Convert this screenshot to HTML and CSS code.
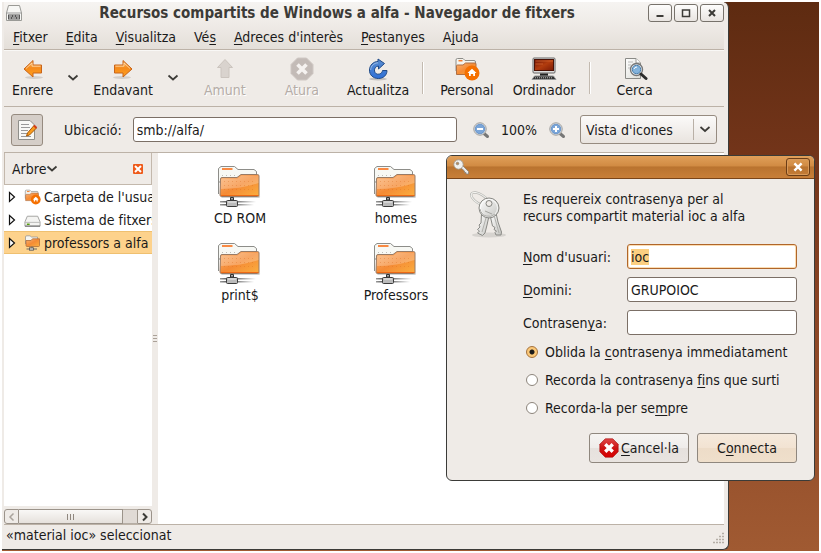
FILE: index.html
```html
<!DOCTYPE html>
<html lang="ca">
<head>
<meta charset="utf-8">
<title>Recursos compartits de Windows a alfa - Navegador de fitxers</title>
<link rel="stylesheet" href="styles.css">
</head>
<body>
<svg class="defs" aria-hidden="true">
  <defs>
    <linearGradient id="g-orange" x1="0" y1="0" x2="0" y2="1"><stop offset="0" stop-color="#fdbb6b"/><stop offset=".45" stop-color="#f58a1c"/><stop offset="1" stop-color="#ffa01c"/></linearGradient>
    <linearGradient id="g-folder" x1="0" y1="0" x2="1" y2="1"><stop offset="0" stop-color="#f9b376"/><stop offset=".5" stop-color="#f58b35"/><stop offset="1" stop-color="#fbb03f"/></linearGradient>
    <linearGradient id="g-paper" x1="0" y1="0" x2="1" y2="1"><stop offset="0" stop-color="#fff"/><stop offset="1" stop-color="#dcdcd6"/></linearGradient>
    <linearGradient id="g-blue" x1="0" y1="0" x2="0" y2="1"><stop offset="0" stop-color="#5b8ed0"/><stop offset="1" stop-color="#2f6fd6"/></linearGradient>
    <linearGradient id="g-screen" x1="0" y1="0" x2="1" y2="1"><stop offset="0" stop-color="#6f1405"/><stop offset=".5" stop-color="#b23c0e"/><stop offset="1" stop-color="#7a1a05"/></linearGradient>
    <linearGradient id="g-metal" x1="0" y1="0" x2="1" y2="1"><stop offset="0" stop-color="#fff"/><stop offset="1" stop-color="#c4c4c0"/></linearGradient>
    <linearGradient id="g-red" x1="0" y1="0" x2="0" y2="1"><stop offset="0" stop-color="#e04848"/><stop offset=".5" stop-color="#cc1414"/><stop offset="1" stop-color="#d80000"/></linearGradient>
    <linearGradient id="g-wire" x1="0" y1="0" x2="1" y2="0"><stop offset="0" stop-color="#999"/><stop offset=".3" stop-color="#444"/><stop offset="1" stop-color="#555" stop-opacity="0"/></linearGradient>
    <symbol id="i-arrow" viewBox="0 0 24 24">
      <ellipse cx="13" cy="20.500" rx="9" ry="1.500" fill="#000" opacity=".12"/>
      <path d="M3 12 L12 3.500 V8 H20.500 V16 H12 V20 Z" fill="url(#g-orange)" stroke="#c8641a" stroke-linejoin="round"/>
      <path d="M5 11.500 L11 6 V9.200 H19.500" fill="none" stroke="#ffdcae" opacity=".8"/>
    </symbol>
    <symbol id="i-up" viewBox="0 0 24 24">
      <path d="M12 2.500 L19.500 10.500 H16 V20.500 H8 V10.500 H4.500 Z" fill="#d9d3ce" stroke="#cbc4be" stroke-linejoin="round"/>
    </symbol>
    <symbol id="i-stop" viewBox="0 0 24 24">
      <path d="M7.500 1 H16.500 L23 7.500 V16.500 L16.500 23 H7.500 L1 16.500 V7.500 Z" fill="#c3bbb7" stroke="#cfc8c4"/>
      <path d="M7.500 7.500 L16.500 16.500 M16.500 7.500 L7.500 16.500" stroke="#f5f2f0" stroke-width="3.600"/>
    </symbol>
    <symbol id="i-cancel" viewBox="0 0 24 24">
      <path d="M7.500 1 H16.500 L23 7.500 V16.500 L16.500 23 H7.500 L1 16.500 V7.500 Z" fill="url(#g-red)" stroke="#a80f0f" stroke-width=".8"/>
      <path d="M7.500 7.500 L16.500 16.500 M16.500 7.500 L7.500 16.500" stroke="#fff" stroke-width="4"/>
    </symbol>
    <symbol id="i-reload" viewBox="0 0 24 24">
      <ellipse cx="12" cy="22" rx="9" ry="1.500" fill="#000" opacity=".18"/>
      <path d="M12 4.500 V2 L18.500 6.500 L12.500 12 V9 C9.500 9.300 8.200 11.500 8.500 14 C9 16.500 11 17.800 13.500 17 C15.500 16.300 16.300 15 16.500 13.500 H21 C21 18.500 17 21.500 12.500 21.500 C7 21.500 3.300 17.800 3.500 13 C3.700 8 7.500 4.500 12 4.500 Z" fill="url(#g-blue)" stroke="#204a87" stroke-linejoin="round"/>
      <path d="M12 5.800 C8 6 4.700 9 4.700 13" fill="none" stroke="#a9c6ec" opacity=".8"/>
    </symbol>
    <symbol id="i-home" viewBox="0 0 26 24">
      <path d="M2 3 Q2 1.500 3.500 1.500 H9 L11 3.500 H20 Q21.500 3.500 21.500 5 V14 H2 Z" fill="#f5f5f0" stroke="#8c8c88"/>
      <path d="M4.500 3.700 H8.500" stroke="#f57c2c" stroke-width="1.500"/>
      <path d="M2.500 17.500 V9 Q2.500 8 3.500 8 H9 L11.500 6 H21 Q22 6 22 7 V17.500 Z" fill="url(#g-folder)" stroke="#b06f43"/>
      <circle cx="18" cy="16" r="7.500" fill="#f57000"/>
      <path d="M18 11.800 L22.500 16 H21 V19 H19.200 V17 H16.800 V19 H15 V16 H13.500 Z" fill="#fff"/>
    </symbol>
    <symbol id="i-computer" viewBox="0 0 26 24">
      <rect x="2" y="1" width="22" height="15" rx="1" fill="#ddd" stroke="#666"/>
      <rect x="3.500" y="2.500" width="19" height="11" fill="url(#g-screen)" stroke="#4a1206"/>
      <path d="M4.500 4 H22 M4.500 7 H12" stroke="#e0743a" opacity=".6"/>
      <path d="M9 16.500 H17 V19 H9 Z" fill="#222"/>
      <path d="M3.500 19 H22.500 L25 22.500 H1 Z" fill="#333" stroke="#999"/>
      <path d="M4 20.800 H22" stroke="#bbb" stroke-dasharray="1 1"/>
    </symbol>
    <symbol id="i-search" viewBox="0 0 26 24">
      <path d="M3.500 1.500 H14 L18.500 6 V21.500 H3.500 Z" fill="url(#g-paper)" stroke="#8a8a86"/>
      <path d="M14 1.500 V6 H18.500" fill="#fff" stroke="#9a9a96"/>
      <path d="M6 5 H11 M6 8 H9 M6 11 H8" stroke="#bbb"/>
      <circle cx="14.500" cy="12.500" r="6" fill="#e8f0f8" stroke="#777" stroke-width="1.400"/>
      <circle cx="14.500" cy="12.500" r="4.200" fill="#83b3dc" stroke="#4d80ac"/>
      <path d="M12 12 Q12.500 10 15 10" fill="none" stroke="#fff"/>
      <path d="M19 17 L24 21.500" stroke="#2c2c2c" stroke-width="3" stroke-linecap="round"/>
    </symbol>
    <symbol id="i-lens" viewBox="0 0 18 18">
      <path d="M12 12.500 L15.500 15.500" stroke="#777" stroke-width="3" stroke-linecap="round"/>
      <circle cx="8" cy="8" r="6.200" fill="#f2f2f0" stroke="#999"/>
      <circle cx="8" cy="8" r="4.800" fill="#7ba6d9" stroke="#5b88c0" stroke-width=".8"/>
    </symbol>
    <symbol id="i-netfolder" viewBox="1 0 46 44">
      <rect x="5" y="31" width="39" height="3" fill="#000" opacity=".18" rx="1.500"/>
      <path d="M2.500 30 V4.500 L5 2.500 H18.500 L22 5.500 H38 L40.500 7.500 V18 H2.500 Z" fill="#f7f8f4" stroke="#8d8d89"/>
      <path d="M6 5 H16.500" stroke="#f98a44" stroke-width="2"/>
      <path d="M6 11.500 H22" stroke="#bdbdb7" stroke-dasharray="1 3"/>
      <path d="M4.500 15 Q4.500 13.500 6 13.500 H21 L25 10.500 H41.500 Q43 10.500 43 12 V31 Q43 32.500 41.500 32.500 H5.500 Q4 32.500 4 31 Z" fill="url(#g-folder)" stroke="#987b66"/>
      <path d="M5 15.500 Q5 14.500 7 14.500 H21.500 L25.500 11.500 H42.500 V19 Q25 25 5 25 Z" fill="#fff" opacity=".24"/>
      <path d="M5 31.500 H42.500" stroke="#ee6a15"/>
      <path d="M8 17.500 H40 M8 21.500 H40 M8 25.500 H40" stroke="#d96a1d" stroke-dasharray="1 3" opacity=".35"/>
      <path d="M14.500 33.500 H17.500 V36 H14.500 Z" fill="#aaa" stroke="#333"/>
      <rect x="4" y="37" width="36" height="1.500" fill="url(#g-wire)"/>
      <rect x="4" y="40" width="34" height="1.500" fill="url(#g-wire)"/>
      <rect x="10.500" y="36.500" width="11" height="6" rx="1" fill="#bbb" stroke="#3c3c3c"/>
      <path d="M12 38 H20" stroke="#eee"/>
    </symbol>
    <symbol id="i-netmini" viewBox="0 0 17 16">
      <path d="M1.500 9 V2 Q1.500 .8 2.700 .8 H6 L7.500 2 H13.500 V6 H1.500 Z" fill="#f5f5f0" stroke="#999590" stroke-width=".8"/>
      <path d="M2 10.500 V5.500 H7 L8.500 3.800 H15.500 V10.500 Q15.500 11.500 14.500 11.500 H3 Q2 11.500 2 10.500 Z" fill="url(#g-folder)" stroke="#b0703c" stroke-width=".8"/>
      <path d="M2.500 14 H13 M8 11.500 V13" stroke="#6b6b68"/>
      <rect x="5.500" y="12.800" width="4" height="2.400" fill="#c9c9c6" stroke="#555" stroke-width=".8"/>
    </symbol>
    <symbol id="i-disk" viewBox="0 0 18 16">
      <path d="M3.500 4 H14.500 L17 10 V14.500 H1 V10 Z" fill="#f4f4f2" stroke="#a0a09e" stroke-linejoin="round"/>
      <path d="M1 10.500 H17" stroke="#b9b9b7"/><path d="M1 14.500 H17" stroke="#666"/><path d="M3 12.500 H6" stroke="#4e9a06" stroke-width="1.500"/>
    </symbol>
    <symbol id="i-cross" viewBox="0 0 10 10"><path d="M2 2 L8 8 M8 2 L2 8" stroke="currentColor" stroke-width="2"/></symbol>
    <symbol id="i-down" viewBox="0 0 12 8"><path d="M1.500 1.500 L6 5.500 L10.500 1.500" fill="none" stroke="#3c3b37" stroke-width="1.700"/></symbol>
    <symbol id="i-expand" viewBox="0 0 8 12"><path d="M1.500 1.500 L6.500 6 L1.500 10.500 Z" fill="#fff" stroke="#111" stroke-width="1.200"/></symbol>
    <symbol id="i-key" viewBox="0 0 16 16">
      <path d="M7.500 8.500 L9.500 6.500 L15.500 12.500 V15 H13 V13.500 H11.500 V12 Z" fill="#ececea" stroke="#8a8278" stroke-width=".8"/>
      <circle cx="5.500" cy="5.500" r="4.700" fill="#f1f1ef" stroke="#9a948c" stroke-width=".8"/>
      <circle cx="4.500" cy="4.500" r="1.300" fill="#b98a55" stroke="#777" stroke-width=".6"/>
    </symbol>
    <symbol id="i-keys" viewBox="0 0 40 48">
      <ellipse cx="21" cy="44" rx="17" ry="2.500" fill="#000" opacity=".1"/>
      <ellipse cx="12" cy="8" rx="10" ry="4.500" transform="rotate(32 12 8)" fill="none" stroke="#b9b9b5" stroke-width="2.400"/>
      <ellipse cx="12" cy="8" rx="10" ry="4.500" transform="rotate(32 12 8)" fill="none" stroke="#f3f3f0"/>
      <path d="M22 24 L28 22 L30 31 L33.500 41 L33 44 H28 L27 41.500 L28.500 40 L26 38.500 L27 36.500 L24.500 35 Z" fill="url(#g-metal)" stroke="#8a8a86"/>
      <path d="M13.500 23 L21 25 L19 34 L17 42 L14.500 44.500 L9.500 42 L11.500 40 L9.500 38.500 L12 36 L11 34 L13 32 Z" fill="url(#g-metal)" stroke="#8a8a86"/>
      <circle cx="21" cy="17" r="10" fill="url(#g-metal)" stroke="#8a8a86"/>
      <circle cx="21" cy="17" r="8.500" fill="none" stroke="#fff" opacity=".8"/>
      <path d="M12 18 A9 9 0 0 0 27 23" fill="none" stroke="#a9a9a5"/>
      <circle cx="21" cy="12.500" r="3" fill="#efebe7" stroke="#858581"/>
      <path d="M18 27 L14 41 M26.500 26 L31 42" stroke="#b0b0ac"/>
      <path d="M17 20 L24 23" stroke="#a5a5a1"/>
    </symbol>
  </defs>
</svg>

<div class="desktop">
  <main class="window">
    <header class="titlebar">
      <svg class="app-icon" viewBox="0 0 16 16" aria-hidden="true"><path d="M2.500 .5 H13.500 L15.500 8 V15.500 H.5 V8 Z" fill="#f7f7f5" stroke="#9a9a96"/><path d="M.5 8 H15.500" stroke="#999"/><rect x="2" y="9.500" width="12" height="5" fill="#555"/><path d="M3 11 H6 M7 11 H9 M10 11 H13 M3 13 H5 M6 13 H10 M11 13 H13" stroke="#ddd"/></svg>
      <h1 class="title">Recursos compartits de Windows a alfa - Navegador de fitxers</h1>
      <div class="window-buttons">
        <button class="wm" aria-label="Minimitza"><svg viewBox="0 0 10 10"><path d="M1.500 8 H8.500" stroke="#3c3b37" stroke-width="2"/></svg></button>
        <button class="wm" aria-label="Maximitza"><svg viewBox="0 0 10 10"><path d="M1.500 2 H8.500 V8.500 H1.500 Z" fill="none" stroke="#3c3b37" stroke-width="1.500"/></svg></button>
        <button class="wm" aria-label="Tanca"><svg><use href="#i-cross"/></svg></button>
      </div>
    </header>
    <nav class="menubar">
      <button><u>F</u>itxer</button>
      <button><u>E</u>dita</button>
      <button><u>V</u>isualitza</button>
      <button>Vé<u>s</u></button>
      <button><u>A</u>dreces d'interès</button>
      <button><u>P</u>estanyes</button>
      <button>A<u>j</u>uda</button>
    </nav>
    <div class="toolbar">
      <button class="tool"><svg><use href="#i-arrow"/></svg>Enrere</button>
      <button class="drop" aria-label="Historial enrere"><svg><use href="#i-down"/></svg></button>
      <button class="tool forward"><svg><use href="#i-arrow"/></svg>Endavant</button>
      <button class="drop" aria-label="Historial endavant"><svg><use href="#i-down"/></svg></button>
      <button class="tool up" disabled><svg><use href="#i-up"/></svg>Amunt</button>
      <button class="tool stop" disabled><svg><use href="#i-stop"/></svg>Atura</button>
      <button class="tool"><svg><use href="#i-reload"/></svg>Actualitza</button>
      <span class="separator"></span>
      <button class="tool home"><svg><use href="#i-home"/></svg>Personal</button>
      <button class="tool"><svg><use href="#i-computer"/></svg>Ordinador</button>
      <span class="separator"></span>
      <button class="tool search"><svg><use href="#i-search"/></svg>Cerca</button>
    </div>
    <div class="locationbar">
      <button class="edit-toggle" aria-label="Edita la ubicació" aria-pressed="true">
        <svg viewBox="0 0 22 22"><path d="M2.500 1.500 H14 L18.500 6 V20.500 H2.500 Z" fill="#f8f8f5" stroke="#8f8f8b"/><path d="M5 5.500 H13 M5 8.500 H14 M5 11.500 H12 M5 14.500 H13 M5 17.500 H15" stroke="#999"/><path d="M18 6.500 L20.500 9 L13.500 16 L10.500 17 L11.500 14 Z" fill="#f99b1c" stroke="#a85a08"/><path d="M18 6.500 L20.500 9" stroke="#d23c1a" stroke-width="2"/></svg>
      </button>
      <label class="location-label" for="location">Ubicació:</label>
      <input class="field location" id="location" type="text" value="smb://alfa/">
      <div class="zoom">
        <button class="lens" aria-label="Redueix"><svg viewBox="0 0 18 18"><use href="#i-lens"/><path d="M5 8 H11" stroke="#fff" stroke-width="2"/></svg></button>
        <span>100%</span>
        <button class="lens" aria-label="Amplia"><svg viewBox="0 0 18 18"><use href="#i-lens"/><path d="M5 8 H11 M8 5 V11" stroke="#fff" stroke-width="2"/></svg></button>
      </div>
      <div class="view-select">
        <select aria-label="Mode de visualització"><option>Vista d'icones</option></select>
        <svg aria-hidden="true"><use href="#i-down"/></svg>
      </div>
    </div>
    <div class="content">
      <aside class="sidebar">
        <div class="side-head">
          <button class="side-mode">Arbre<svg><use href="#i-down"/></svg></button>
          <button class="side-close" aria-label="Tanca la barra lateral"><svg><use href="#i-cross"/></svg></button>
        </div>
        <ul class="tree">
          <li><svg class="expander"><use href="#i-expand"/></svg><svg class="node-icon"><use href="#i-home"/></svg>Carpeta de l'usuari</li>
          <li><svg class="expander"><use href="#i-expand"/></svg><svg class="node-icon"><use href="#i-disk"/></svg>Sistema de fitxers</li>
          <li class="selected"><svg class="expander"><use href="#i-expand"/></svg><svg class="node-icon"><use href="#i-netmini"/></svg>professors a alfa</li>
        </ul>
        <div class="scrollbar">
          <button class="step left" aria-label="Desplaça a l'esquerra"><svg viewBox="0 0 8 10"><path d="M5.500 1.500 L2 5 L5.500 8.500" fill="none" stroke="#aaa39c" stroke-width="1.500"/></svg></button>
          <span class="thumb"><i></i><i></i><i></i></span>
          <span class="track"></span>
          <button class="step right" aria-label="Desplaça a la dreta"><svg viewBox="0 0 8 10"><path d="M2 1.500 L5.500 5 L2 8.500" fill="none" stroke="#3c3b37" stroke-width="2"/></svg></button>
        </div>
      </aside>
      <div class="splitter"><i></i><i></i><i></i></div>
      <section class="files">
        <div class="file"><svg><use href="#i-netfolder"/></svg><span>CD ROM</span></div>
        <div class="file"><svg><use href="#i-netfolder"/></svg><span>homes</span></div>
        <div class="file"><svg><use href="#i-netfolder"/></svg><span>print$</span></div>
        <div class="file"><svg><use href="#i-netfolder"/></svg><span>Professors</span></div>
      </section>
    </div>
    <footer class="statusbar">«material ioc» seleccionat
      <svg class="grip" viewBox="0 0 12 12" aria-hidden="true"><path d="M10 1.500 H12 M7 4.500 H12 M4 7.500 H12 M1 10.500 H12" stroke="#b5aea6" stroke-width="1.500" stroke-dasharray="2 1"/></svg>
    </footer>
  </main>

  <form class="dialog" role="dialog" aria-label="Autenticació">
    <div class="dialog-title">
      <svg class="key" aria-hidden="true"><use href="#i-key"/></svg>
      <button type="button" class="dialog-close" aria-label="Tanca"><svg><use href="#i-cross"/></svg></button>
    </div>
    <div class="dialog-body">
      <svg class="keys" aria-hidden="true"><use href="#i-keys"/></svg>
      <div class="dialog-main">
        <p class="message">Es requereix contrasenya per al<br>recurs compartit material ioc a alfa</p>
        <div class="fields">
          <label for="user"><u>N</u>om d'usuari:</label><input class="field active" id="user" type="text" value="ioc">
          <label for="domain"><u>D</u>omini:</label><input class="field" id="domain" type="text" value="GRUPOIOC">
          <label for="pass">Contrasen<u>y</u>a:</label><input class="field" id="pass" type="password">
        </div>
        <div class="choices">
          <label><input type="radio" name="keep" checked><span>Oblida la <u>c</u>ontrasenya immediatament</span></label>
          <label><input type="radio" name="keep"><span>Recorda la contrasenya <u>fi</u>ns que surti</span></label>
          <label><input type="radio" name="keep"><span>Recorda-la per se<u>m</u>pre</span></label>
        </div>
        <div class="actions">
          <button type="button" class="push"><svg><use href="#i-cancel"/></svg><span><u>C</u>ancel·la</span></button>
          <button type="submit" class="push default"><span>C<u>o</u>nnecta</span></button>
        </div>
      </div>
    </div>
  </form>
</div>
<script src="script.js"></script>
</body>
</html>
```
FILE: script.js
```js
const user = document.getElementById("user");
user.focus();
user.select();
```
FILE: styles.css
```css
* { box-sizing: border-box; }

body {
  margin: 0;
  background: #fff;
  color: #1a1a1a;
  font: 14px/18px "DejaVu Sans Condensed", "DejaVu Sans", sans-serif;
}

.defs { position: absolute; width: 0; height: 0; }
svg { display: block; flex: none; }
u { text-decoration-thickness: 1px; text-underline-offset: 2px; text-decoration-skip-ink: none; }

button, input, select {
  margin: 0;
  padding: 0;
  font: inherit;
  color: inherit;
}
button { border: 0; background: none; white-space: nowrap; }

.desktop {
  position: relative;
  height: calc(100vh - 4px);
  margin: 2px;
  background: linear-gradient(#5e2b11, #74351a 30%, #8a4424 55%, #a05a32);
}

/* Main window */
.window {
  display: flex;
  flex-direction: column;
  height: calc(100% - 1px);
  margin-right: 90px;
  padding: 0 4px 0 2px;
  background: #efebe7;
  border-right: 1px solid #3b3b38;
  border-bottom: 1px solid #3b3b38;
  border-radius: 0 6px 6px 0;
}

.titlebar {
  display: flex;
  align-items: center;
  height: 22px;
  padding: 0 0 0 2px;
  background: linear-gradient(#f6f4f2, #efebe7);
}
.app-icon { width: 16px; height: 16px; }
.title {
  flex: 1;
  margin: 0;
  padding-left: 4px;
  font-size: 15px;
  line-height: 18px;
  text-align: center;
  color: #3c3b37;
}
.window-buttons { display: flex; gap: 2px; }
.wm {
  display: grid;
  place-items: center;
  width: 24px;
  height: 18px;
  background: linear-gradient(#fdfdfc, #e9e5e1);
  border: 1px solid #77726b;
  border-radius: 3px;
}
.wm svg { width: 10px; height: 10px; color: #3c3b37; }

.menubar {
  display: flex;
  gap: 18px;
  height: 26px;
  padding: 0 9px;
  background: linear-gradient(#efebe7, #e4dfd9);
  border-bottom: 1px solid #bcb2a7;
}

.toolbar {
  display: flex;
  align-items: center;
  height: 57px;
  padding: 0 8px 1px;
  border-bottom: 1px solid #bcb2a7;
  border-top: 1px solid #f9f8f6;
}
.tool { display: flex; flex-direction: column; align-items: center; }
.tool svg { width: 26px; height: 24px; }
.tool:disabled { color: #b5ada7; text-shadow: 1px 1px #fff; }
.forward svg { transform: scaleX(-1); }
.drop { width: 40px; }
.drop svg { width: 12px; height: 8px; margin: 0 auto; }
.up { margin-left: 11px; }
.stop { margin: 0 28px 0 39px; }
.separator {
  width: 2px;
  height: 32px;
  margin: 0 16px 0 13px;
  background: #c3bab0;
  border-right: 1px solid #fff;
}
.home { margin-right: 19px; }
.search { margin-left: 10px; }

.locationbar {
  display: flex;
  align-items: center;
  height: 46px;
  padding: 0 7px;
  border-bottom: 1px solid #bcb2a7;
}
.edit-toggle {
  display: grid;
  place-items: center;
  width: 32px;
  height: 32px;
  background: #d5cec8;
  border: 1px solid #968b80;
  border-radius: 3px;
}
.edit-toggle svg { width: 22px; height: 22px; }
.location-label { margin: 0 11px 0 21px; }

.field {
  min-width: 0;
  height: 25px;
  padding: 0 3px;
  background: #fff;
  border: 1px solid #7b6f66;
  border-radius: 3px;
  outline: 0;
}
.location { flex: 1; }
.field.active { border-color: #b0662a; box-shadow: inset 0 0 0 1px #fbdcb2; }
.field::selection { background: #fccf81; color: #1a1a1a; }

.zoom { display: flex; align-items: center; gap: 11px; margin: 0 14px 0 15px; }
.lens svg { width: 18px; height: 18px; }
.view-select {
  position: relative;
  width: 137px;
  height: 29px;
  background: linear-gradient(#fbfaf9, #e9e4df);
  border: 1px solid #968b80;
  border-radius: 3px;
}
.view-select select {
  appearance: none;
  width: 100%;
  height: 100%;
  padding: 0 5px;
  background: none;
  border: 0;
}
.view-select svg {
  position: absolute;
  top: 3px;
  right: 0;
  width: 23px;
  height: 21px;
  padding: 6px 5px;
  border-left: 1px solid #b9b0a6;
  pointer-events: none;
}

.content { display: flex; flex: 1; min-height: 0; }
.sidebar { display: flex; flex-direction: column; width: 148px; }
.side-head {
  display: flex;
  align-items: center;
  justify-content: space-between;
  height: 32px;
  padding: 0 8px 0 7px;
  border: 1px solid #c3b8ac;
  border-top-width: 0;
}
.side-mode { display: flex; align-items: center; }
.side-mode svg { width: 12px; height: 8px; }
.side-close {
  width: 10px;
  height: 10px;
  background: #ee5a1a;
  color: #fff;
  border-radius: 1px;
}
.side-close svg { width: 10px; height: 10px; }
.tree {
  flex: 1;
  margin: 0;
  padding: 0;
  overflow: hidden;
  background: #fff;
  list-style: none;
}
.tree li {
  display: flex;
  align-items: center;
  height: 23px;
  padding-left: 4px;
  white-space: nowrap;
}
.tree .selected { background: #fdd28c; border: solid #efc070; border-width: 1px 0; }
.expander { width: 8px; height: 12px; margin-right: 8px; }
.node-icon { width: 17px; height: 16px; margin-right: 3px; }
.scrollbar { display: flex; height: 15px; margin-top: 3px; }
.step {
  display: grid;
  place-items: center;
  width: 15px;
  background: #efebe7;
  border: 1px solid #9b938a;
}
.step.left { border-radius: 3px 0 0 3px; }
.step.right { border-radius: 0 3px 3px 0; }
.step svg { width: 8px; height: 10px; }
.thumb {
  display: flex;
  flex: 1;
  align-items: center;
  justify-content: center;
  gap: 2px;
  background: linear-gradient(#f9f8f6, #e6e1dc);
  border: solid #9b938a;
  border-width: 1px 1px 1px 0;
}
.thumb i { width: 1px; height: 6px; background: #8f877e; }
.track { width: 14px; background: #e0dad5; border: solid #b5ada4; border-width: 1px 0; }

.splitter {
  display: flex;
  flex-direction: column;
  align-items: center;
  justify-content: center;
  gap: 2px;
  width: 6px;
}
.splitter i { width: 4px; height: 1px; background: #aaa198; }

.files {
  display: grid;
  flex: 1;
  grid-template-columns: repeat(2, 156px);
  grid-auto-rows: 77px;
  align-content: start;
  padding: 11px 4px;
  background: #fff;
}
.file { display: flex; flex-direction: column; align-items: center; }
.file svg { width: 46px; height: 44px; margin-bottom: 1px; }

.statusbar {
  display: flex;
  align-items: end;
  justify-content: space-between;
  height: 25px;
  padding: 0 0 5px 2px;
  border-top: 1px solid #bcb2a7;
}
.grip { width: 12px; height: 12px; }

/* Password dialog */
.dialog {
  position: absolute;
  top: 153px;
  right: 4px;
  background: #efebe7;
  border: 1px solid #3b3b38;
  border-radius: 6px;
  overflow: hidden;
}
.dialog-title {
  display: flex;
  align-items: center;
  justify-content: space-between;
  height: 23px;
  padding: 0 4px 0 6px;
  background: linear-gradient(#e0a05a, #d18b43 45%, #b9732f 50%, #c87f39);
  border-bottom: 1px solid #7a4519;
}
.key { width: 16px; height: 16px; }
.dialog-close {
  display: grid;
  place-items: center;
  width: 24px;
  height: 18px;
  color: #fff;
  border: 1px solid #6b3d16;
  border-radius: 3px;
  box-shadow: inset 0 0 0 1px #d99a5a;
}
.dialog-close svg { width: 12px; height: 12px; }
.dialog-body { display: flex; gap: 15px; padding: 11px 17px 17px 21px; }
.keys { width: 40px; height: 48px; margin-top: 1px; }
.message { margin: 1px 0 19px; line-height: 17px; }
.fields {
  display: grid;
  grid-template-columns: auto 170px;
  align-items: center;
  justify-content: space-between;
  gap: 8px 16px;
}
.choices { display: flex; flex-direction: column; gap: 10px; margin: 8px 0 16px; }
.choices label { display: flex; align-items: center; gap: 7px; padding-left: 3px; }
.choices input {
  appearance: none;
  width: 12px;
  height: 12px;
  background: #fff;
  border: 1px solid #8d857c;
  border-radius: 50%;
}
.choices input:checked {
  background: radial-gradient(circle, #1a1a1a 2px, #fbc878 3px);
  border-color: #a5713a;
}
.actions { display: flex; justify-content: flex-end; gap: 8px; }
.push {
  display: flex;
  align-items: center;
  justify-content: center;
  gap: 2px;
  width: 100px;
  height: 30px;
  background: linear-gradient(#f6f4f2, #efecea 50%, #e6e1dd 51%, #e9e4e0);
  border: 1px solid #8f877e;
  border-radius: 3px;
}
.push svg { width: 20px; height: 20px; }
.push.default { background: linear-gradient(#f5e9dc, #f2e3d2 50%, #eddcc8 51%, #efdfcb); }
```
